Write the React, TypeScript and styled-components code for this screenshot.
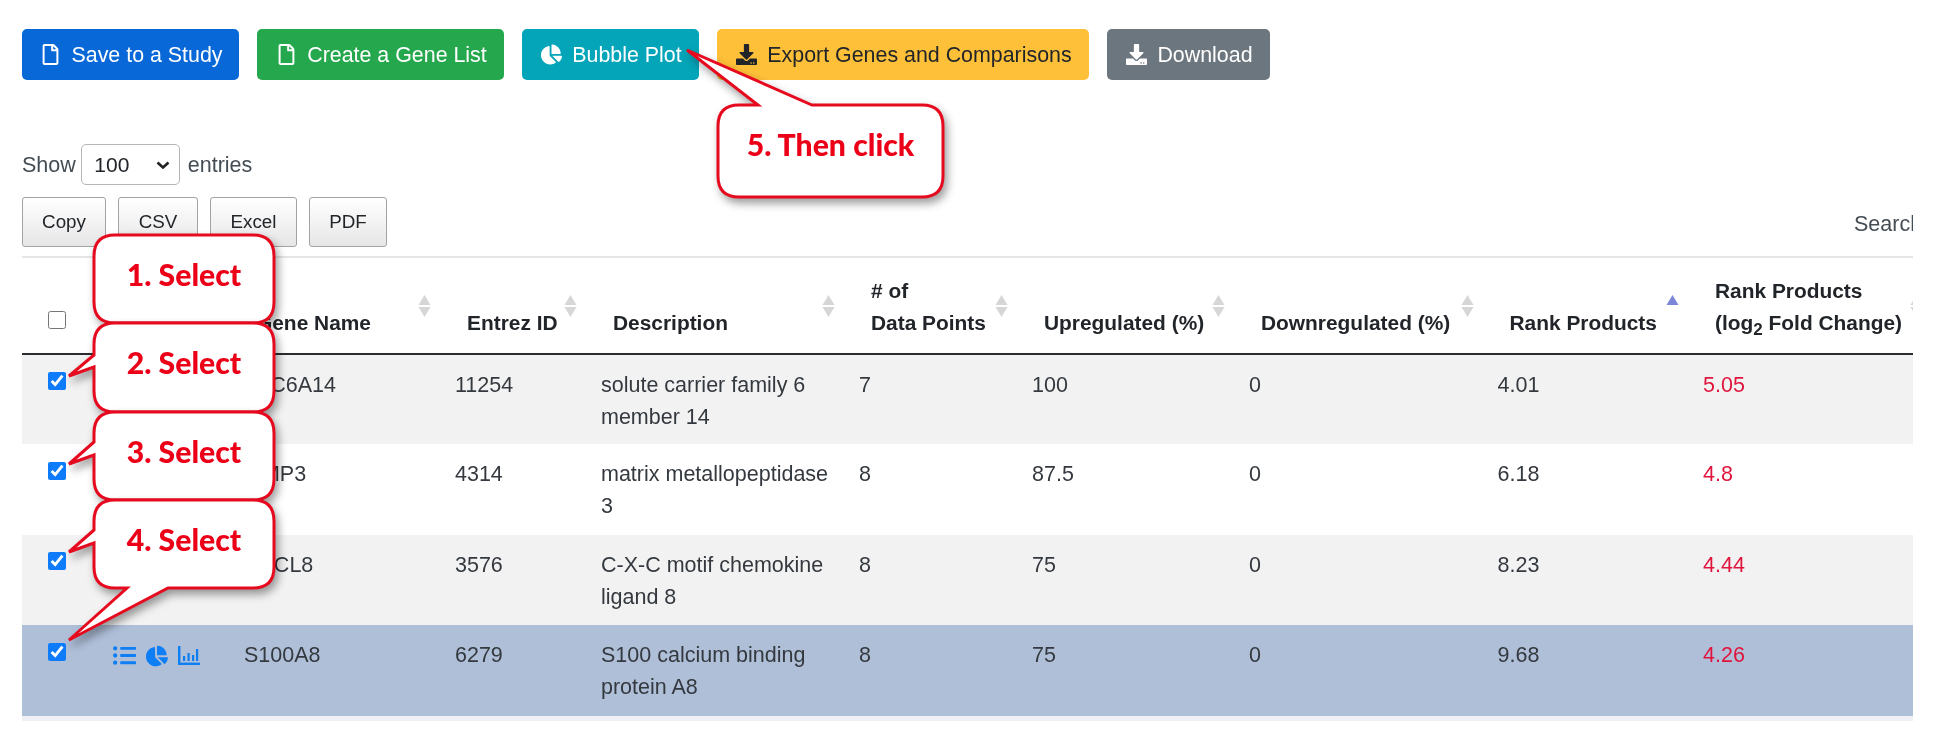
import React from "react";
import styled, { createGlobalStyle } from "styled-components";
import { FaRegFile, FaChartPie, FaDownload, FaListUl } from "react-icons/fa";

const Global = createGlobalStyle`
  html, body { margin: 0; padding: 0; background: #fff; }
  body { font-family: "Liberation Sans", Arial, sans-serif; color: #212529; }
`;

const Page = styled.div`
  position: relative;
  width: 1940px;
  height: 730px;
  box-sizing: border-box;
  padding: 29px 27px 0 22px;
  overflow: hidden;
  font-size: 21.5px;
  line-height: 32px;
  filter: blur(0.35px);
`;

const Toolbar = styled.div`
  display: flex;
  gap: 18px;
  font-size: 21.4px;
`;

const ActionButton = styled.button<{ $bg: string; $fg: string; $w: number }>`
  display: inline-flex;
  align-items: center;
  justify-content: center;
  gap: 10px;
  width: ${(p) => p.$w}px;
  height: 51px;
  padding: 0 0 0 2px;
  border: 0;
  border-radius: 5px;
  background: ${(p) => p.$bg};
  color: ${(p) => p.$fg};
  font: inherit;
  white-space: nowrap;
  svg { font-size: 21px; flex: none; }
`;

const LengthRow = styled.div`
  display: flex;
  align-items: center;
  gap: 5.5px;
  height: 41px;
  margin-top: 64px;
  color: #444c54;
`;

const EntriesSelect = styled.select`
  width: 99px;
  height: 41px;
  margin-right: 2px;
  padding: 0 0 0 12px;
  border: 1px solid #b5b5b5;
  border-radius: 5px;
  appearance: none;
  background: #fff url("data:image/svg+xml,%3Csvg xmlns='http://www.w3.org/2000/svg' width='14' height='8' viewBox='0 0 14 8'%3E%3Cpath d='M1.5 1.5 7 6.5 12.5 1.5' fill='none' stroke='%23222' stroke-width='2.6'/%3E%3C/svg%3E") no-repeat right 9px center;
  color: #212529;
  font: inherit;
  font-size: 21px;
`;

const ExportRow = styled.div`
  display: flex;
  align-items: center;
  justify-content: space-between;
  margin-top: 12px;
  height: 50px;
`;

const ExportGroup = styled.div`
  display: flex;
  gap: 12px;
`;

const ExportButton = styled.button<{ $w: number }>`
  width: ${(p) => p.$w}px;
  height: 50px;
  padding: 0;
  border: 1.5px solid #a3a3a3;
  border-radius: 3px;
  background: linear-gradient(to bottom, #fff 0%, #e6e6e6 100%);
  color: #212529;
  font: inherit;
  font-size: 18.8px;
`;

const SearchLabel = styled.span`
  width: 59px;
  margin-top: 3px;
  overflow: hidden;
  white-space: nowrap;
  color: #444c54;
`;

const TableClip = styled.div`
  margin-top: 9px;
  overflow: hidden;
`;

const DataTable = styled.table`
  width: 1914px;
  table-layout: fixed;
  border-collapse: collapse;
  border-top: 2px solid #e6e6e6;
`;

const HeadCell = styled.th`
  position: relative;
  height: 96.5px;
  box-sizing: border-box;
  padding: 0 0 14px 23px;
  border-bottom: 2px solid #2a2d30;
  vertical-align: bottom;
  text-align: left;
  font-size: 20.9px;
  font-weight: 700;
  white-space: nowrap;
  sub { font-size: 17px; line-height: 0; }
`;

const Row = styled.tr<{ $bg: string }>`
  height: 90.5px;
  background: ${(p) => p.$bg};
  & + & td { border-top: 1.5px solid #e4e4e4; }
`;

const Cell = styled.td<{ $red?: boolean }>`
  box-sizing: border-box;
  padding: 14px 8px 0 11px;
  vertical-align: top;
  color: ${(p) => (p.$red ? "#e0143c" : "#34393f")};
`;

const CheckCell = styled.td`
  box-sizing: border-box;
  padding: 17.5px 0 0 26px;
  vertical-align: top;
  line-height: 0;
`;

const HeadCheckCell = styled(HeadCell)`
  padding: 0 0 24px 26px;
  line-height: 0;
`;

const Tick = styled.input`
  width: 18px;
  height: 18px;
  margin: 0;
  accent-color: #0d7bfa;
`;

const RowIcons = styled.div`
  display: flex;
  align-items: center;
  gap: 10px;
  padding: 5px 0 0 2px;
  color: #0d7ef4;
  svg { flex: none; }
`;

const Bottom = styled.div`
  height: 5px;
  background: #eef0f3;
`;

const SortMark = styled.svg`
  position: absolute;
  top: 36px;
  right: 13px;
  width: 13px;
  height: 24px;
`;

const CalloutBox = styled.div<{ $x: number; $y: number; $w: number; $h: number }>`
  position: absolute;
  left: ${(p) => p.$x}px;
  top: ${(p) => p.$y}px;
  width: ${(p) => p.$w}px;
  height: ${(p) => p.$h}px;
  box-sizing: border-box;
  padding-top: 22px;
  text-align: center;
  font-family: Lato, "Open Sans", sans-serif;
  font-weight: 900;
  font-size: 30.2px;
  line-height: 34px;
  color: #ec0018;
`;

const CalloutShape = styled.svg`
  position: absolute;
  left: 0;
  top: 0;
  width: 100%;
  height: 100%;
  overflow: visible;
  filter: drop-shadow(3px 5px 4px rgba(0, 0, 0, 0.38));
`;

const CalloutText = styled.span`
  position: relative;
`;

type Pt = [number, number];
type CalloutDef = {
  text: string;
  x: number; y: number; w: number; h: number;
  top?: [number, number, Pt];
  left?: [number, number, Pt];
  bottom?: [number, number, Pt];
};

const boxPath = ({ w, h, top, left, bottom }: CalloutDef) => {
  const r = 21;
  let d = `M${r} 0`;
  if (top) d += ` L${top[0]} 0 L${top[2][0]} ${top[2][1]} L${top[1]} 0`;
  d += ` L${w - r} 0 Q${w} 0 ${w} ${r} L${w} ${h - r} Q${w} ${h} ${w - r} ${h}`;
  if (bottom) d += ` L${bottom[1]} ${h} L${bottom[2][0]} ${bottom[2][1]} L${bottom[0]} ${h}`;
  d += ` L${r} ${h} Q0 ${h} 0 ${h - r}`;
  if (left) d += ` L0 ${left[1]} L${left[2][0]} ${left[2][1]} L0 ${left[0]}`;
  d += ` L0 ${r} Q0 0 ${r} 0 Z`;
  return d;
};

const callouts: CalloutDef[] = [
  { text: "1. Select", x: 94, y: 235, w: 180, h: 88 },
  { text: "2. Select", x: 94, y: 323, w: 180, h: 89, left: [32, 44, [-25, 53]] },
  { text: "3. Select", x: 94, y: 412, w: 180, h: 88, left: [30, 43, [-25, 52]] },
  { text: "4. Select", x: 94, y: 500, w: 180, h: 88, left: [30, 43, [-25, 52]], bottom: [33, 74, [-25, 140]] },
  { text: "5. Then click", x: 718, y: 105, w: 225, h: 92, top: [40, 94, [-31, -55]] },
];

const Callout = ({ def }: { def: CalloutDef }) => (
  <CalloutBox $x={def.x} $y={def.y} $w={def.w} $h={def.h}>
    <CalloutShape viewBox={`0 0 ${def.w} ${def.h}`}>
      <path d={boxPath(def)} fill="#fff" stroke="#e60a1e" strokeWidth={3} strokeLinejoin="miter" />
    </CalloutShape>
    <CalloutText>{def.text}</CalloutText>
  </CalloutBox>
);

const Sort = ({ active }: { active?: boolean }) => (
  <SortMark viewBox="0 0 13 24">
    <path d="M6.5 1 L12.5 11 L0.5 11 Z" fill={active ? "#7d87d9" : "#d6d6d6"} />
    {!active && <path d="M0.5 13 L12.5 13 L6.5 23 Z" fill="#d6d6d6" />}
  </SortMark>
);

const ChartBars = () => (
  <svg width="22" height="19" viewBox="0 0 22 19" fill="currentColor">
    <rect x="0" y="0" width="2.4" height="19" />
    <rect x="0" y="16.6" width="22" height="2.4" />
    <rect x="5" y="10" width="2.2" height="5" />
    <rect x="9.5" y="7" width="2.2" height="8" />
    <rect x="14" y="9" width="2.2" height="6" />
    <rect x="18" y="3" width="2.2" height="12" />
  </svg>
);

const columns = [78, 133, 211, 146, 258, 173, 217, 248.5, 205.5, 244];

const heads: { label: React.ReactNode; sort?: boolean; active?: boolean }[] = [
  { label: "" },
  { label: "Gene Name", sort: true },
  { label: "Entrez ID", sort: true },
  { label: "Description", sort: true },
  { label: <># of<br />Data Points</>, sort: true },
  { label: "Upregulated (%)", sort: true },
  { label: "Downregulated (%)", sort: true },
  { label: "Rank Products", sort: true, active: true },
  { label: <>Rank Products<br />(log<sub>2</sub> Fold Change)</>, sort: true },
];

const rows = [
  { gene: "SLC6A14", id: "11254", desc: "solute carrier family 6 member 14", pts: "7", up: "100", down: "0", rank: "4.01", fc: "5.05", bg: "#f2f2f2" },
  { gene: "MMP3", id: "4314", desc: "matrix metallopeptidase 3", pts: "8", up: "87.5", down: "0", rank: "6.18", fc: "4.8", bg: "#ffffff" },
  { gene: "CXCL8", id: "3576", desc: "C-X-C motif chemokine ligand 8", pts: "8", up: "75", down: "0", rank: "8.23", fc: "4.44", bg: "#f2f2f2" },
  { gene: "S100A8", id: "6279", desc: "S100 calcium binding protein A8", pts: "8", up: "75", down: "0", rank: "9.68", fc: "4.26", bg: "#afbfd8", icons: true },
];

const exportsList: [string, number][] = [["Copy", 84], ["CSV", 80], ["Excel", 87], ["PDF", 78]];

export default function App() {
  return (
    <Page>
      <Global />
      <Toolbar>
        <ActionButton $w={217} $bg="#0868d8" $fg="#fff"><FaRegFile />Save to a Study</ActionButton>
        <ActionButton $w={247} $bg="#25a84d" $fg="#fff"><FaRegFile />Create a Gene List</ActionButton>
        <ActionButton $w={177} $bg="#04a5b9" $fg="#fff"><FaChartPie />Bubble Plot</ActionButton>
        <ActionButton $w={372} $bg="#ffc039" $fg="#212529"><FaDownload />Export Genes and Comparisons</ActionButton>
        <ActionButton $w={163} $bg="#6c767e" $fg="#fff"><FaDownload />Download</ActionButton>
      </Toolbar>
      <LengthRow>
        Show
        <EntriesSelect defaultValue="100">
          <option>10</option>
          <option>25</option>
          <option>50</option>
          <option>100</option>
        </EntriesSelect>
        entries
      </LengthRow>
      <ExportRow>
        <ExportGroup>
          {exportsList.map(([label, w]) => (
            <ExportButton key={label} $w={w}>{label}</ExportButton>
          ))}
        </ExportGroup>
        <SearchLabel>Search:</SearchLabel>
      </ExportRow>
      <TableClip>
        <DataTable>
          <colgroup>
            {columns.map((w, i) => <col key={i} width={w} />)}
          </colgroup>
          <thead>
            <tr>
              <HeadCheckCell><Tick type="checkbox" readOnly /></HeadCheckCell>
              {heads.map((h, i) => (
                <HeadCell key={i}>
                  {h.label}
                  {h.sort && <Sort active={h.active} />}
                </HeadCell>
              ))}
            </tr>
          </thead>
          <tbody>
            {rows.map((r) => (
              <Row key={r.id} $bg={r.bg}>
                <CheckCell><Tick type="checkbox" checked readOnly /></CheckCell>
                <Cell>
                  {r.icons && (
                    <RowIcons>
                      <FaListUl size={23} />
                      <FaChartPie size={22} />
                      <ChartBars />
                    </RowIcons>
                  )}
                </Cell>
                <Cell>{r.gene}</Cell>
                <Cell>{r.id}</Cell>
                <Cell>{r.desc}</Cell>
                <Cell>{r.pts}</Cell>
                <Cell>{r.up}</Cell>
                <Cell>{r.down}</Cell>
                <Cell>{r.rank}</Cell>
                <Cell $red>{r.fc}</Cell>
              </Row>
            ))}
          </tbody>
        </DataTable>
        <Bottom />
      </TableClip>
      {callouts.map((c) => <Callout key={c.text} def={c} />)}
    </Page>
  );
}
